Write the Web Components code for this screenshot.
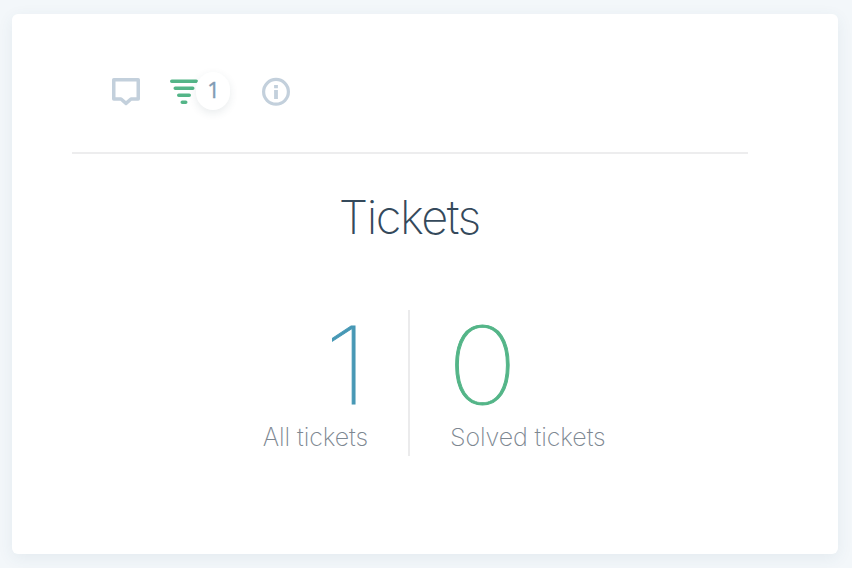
<!DOCTYPE html>
<html lang="en"><head><meta charset="utf-8"><title>Tickets</title>
<style>html,body{margin:0;height:100%}body{background:#f3f7fa;overflow:hidden}</style></head><body>
<ticket-card></ticket-card>
<script>
class TicketIcon extends HTMLElement{
 connectedCallback(){
  const shapes={
   comment:'<path d="M1.75 1.75H26.25V21H19L14 25.4L9 21H1.75Z" stroke-width="3.5" stroke-linejoin="round"/>',
   filter:'<path d="M1.75 3.25H26.25M5.25 10.25H22.75M8.75 17.25H19.25M12.25 24.25H15.75" stroke-width="3.5" stroke-linecap="round"/>',
   info:'<circle cx="14" cy="13.8" r="12.4" stroke-width="3.2"/><path d="M14 7V10.2M14 12V21" stroke-width="3.8"/>'};
  this.attachShadow({mode:'open'}).innerHTML=`<style>:host{display:block;width:28px;height:28px}svg{display:block;overflow:visible}</style><svg width="28" height="28" fill="none" stroke="currentColor">${shapes[this.getAttribute('name')]}</svg>`;
 }}
customElements.define('ticket-icon',TicketIcon);
class TicketMetric extends HTMLElement{
 connectedCallback(){this.attachShadow({mode:'open'}).innerHTML=`<style>:host{display:block;box-sizing:border-box}
 .value{font:100 107px/110px Inter,sans-serif;height:111px;-webkit-text-stroke:.9px currentColor;transform:translateX(var(--digit-shift,0px)) scaleX(var(--digit-width,1.12));transform-origin:var(--digit-origin,0)}.label{font:200 25px/32px Inter,sans-serif;color:#7d8791;white-space:nowrap;letter-spacing:-.1px}</style><div class="value"><slot name="value"></slot></div><div class="label"><slot></slot></div>`;}}
customElements.define('ticket-metric',TicketMetric);
class TicketCard extends HTMLElement{
 connectedCallback(){this.attachShadow({mode:'open'}).innerHTML=`<style>
 :host{display:block;box-sizing:border-box;margin-left:12px;width:826px;height:568px;padding-top:14px;font-family:Inter,sans-serif}
 main{height:540px;box-sizing:border-box;padding:0 90px 0 60px;background:white;border-radius:6px;box-shadow:0 4px 16px #385b7414}
 header{height:140px;box-sizing:border-box;border-bottom:2px solid #ededee;padding:64px 0 0 40px;display:flex;gap:30px;color:#c3d0dc}
 .filter{position:relative;color:#54b588;width:62px}.badge{position:absolute;left:26px;top:-6px;width:34px;height:38px;border-radius:17px;background:#fff;color:#819bb4;box-shadow:0 3px 9px #2940521a;text-align:center;font:400 22px/34px "Open Sans",sans-serif;-webkit-text-stroke:.4px currentColor;text-indent:1px}
 h1{margin:37px 0 0;height:52px;text-align:center;color:#34495b;font:200 47px/52px Inter,sans-serif;letter-spacing:-1.5px;text-indent:-1.5px}
 .metrics{display:flex;margin-top:67px;height:146px}.all{--digit-width:1.15;--digit-origin:100%;--digit-shift:1px;width:338px;padding-right:40px;border-right:2px solid #ebebec;text-align:right;color:#4798b5}.solved{--digit-width:1.12;--digit-shift:-3px;padding-left:40px;color:#54b588}
 </style><main><header><ticket-icon name="comment"></ticket-icon><div class="filter"><ticket-icon name="filter"></ticket-icon><span class="badge">1</span></div><ticket-icon name="info"></ticket-icon></header><h1>Tickets</h1><section class="metrics"><ticket-metric class="all"><span slot="value">1</span>All tickets</ticket-metric><ticket-metric class="solved"><span slot="value">0</span>Solved tickets</ticket-metric></section></main>`;}}
customElements.define('ticket-card',TicketCard);
</script></body></html>
